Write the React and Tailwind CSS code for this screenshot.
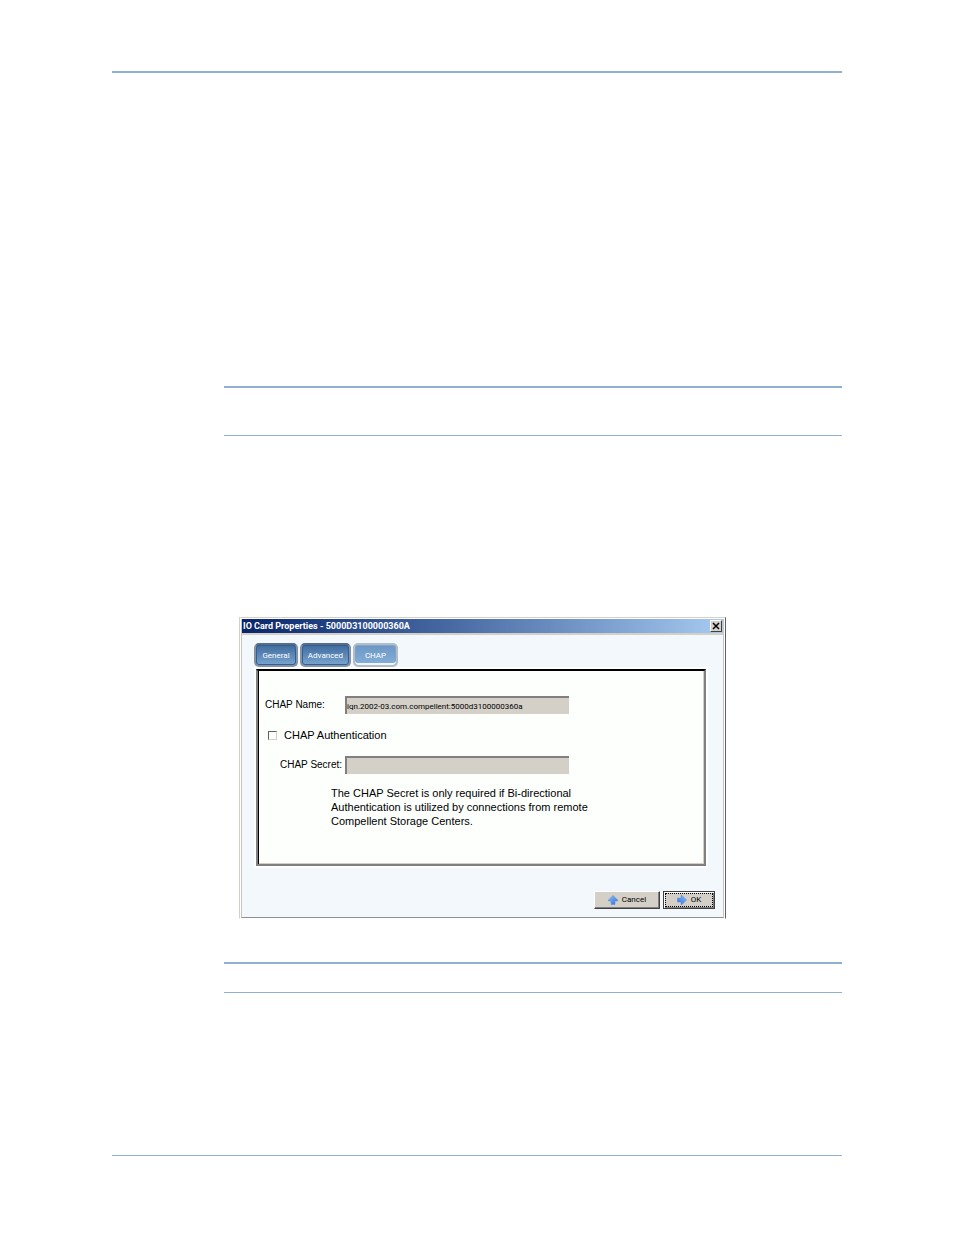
import React from "react";

const tabBase =
  "h-6 rounded-[5px] border-2 pt-px text-[8px] leading-none text-white flex items-center justify-center font-[Roboto,sans-serif]";

function Tab({ label, active, width }) {
  const look = active
    ? "border-[#b4bcc4] bg-linear-to-b from-[#6c97c4] to-[#86afd8] shadow-[inset_0_-2px_0_#f0f5fa,inset_0_0_0_1px_#7ba5d0]"
    : "border-[#8593a3] border-t-[#5a6c82] bg-linear-to-b from-[#3e6b9e] to-[#7ba5d0] shadow-[inset_0_0_0_1px_#2f5f96]";
  return (
    <button type="button" role="tab" aria-selected={Boolean(active)} className={`${tabBase} ${look} ${width}`}>
      {label}
    </button>
  );
}

function Arrow({ className }) {
  return (
    <svg viewBox="0 0 10 10" className={`size-[10px] shrink-0 ${className}`} aria-hidden="true">
      <defs>
        <linearGradient id="arrowFill" x1="0" y1="0" x2="1" y2="1">
          <stop offset="0" stopColor="#8cc0fb" />
          <stop offset="1" stopColor="#2f6fdc" />
        </linearGradient>
      </defs>
      <path d="M5 0.4 L9.6 5 V6 H7 V9.6 H3 V6 H0.4 V5 Z" fill="url(#arrowFill)" stroke="#5a8cd8" strokeWidth="0.5" />
    </svg>
  );
}

const field =
  "h-[18px] w-56 shrink-0 bg-[#d4d0c8] border-0 border-t-2 border-l-2 border-[#808080] text-[8px] leading-none text-black outline-none font-[Roboto,sans-serif]";

function Dialog() {
  return (
    <section
      role="dialog"
      aria-label="IO Card Properties"
      className="w-[487px] max-w-full border border-[#d4d0c8] border-r-[#606060] border-b-white bg-white p-px pb-0"
    >
      <div className="border border-[#c8c5be] border-t-0 border-b-[#909090] bg-[#f3f8fc]">
        <header className="flex h-[14px] items-center justify-between bg-linear-to-r from-[#0a246a] to-[#a6caf0] px-px">
          <h1 className="text-[9px] leading-none font-bold text-white font-[Roboto,sans-serif]">
            IO Card Properties - 5000D3100000360A
          </h1>
          <button
            type="button"
            aria-label="Close"
            className="flex h-3 w-3 items-center justify-center border border-white border-r-[#404040] border-b-[#404040] bg-[#d4d0c8]"
          >
            <svg viewBox="0 0 8 8" className="size-2" aria-hidden="true">
              <path d="M1 1 L7 7 M7 1 L1 7" stroke="#000" strokeWidth="1.5" />
            </svg>
          </button>
        </header>
        <div className="border-t-2 border-[#d4d0c8] px-3 pt-2 pb-2">
          <div role="tablist" className="flex gap-[2px]">
            <Tab label="General" width="w-11" />
            <Tab label="Advanced" width="w-[51px]" />
            <Tab label="CHAP" width="w-[45px]" active />
          </div>
          <div className="mr-[3px] bg-white p-[2px]">
            <form className="h-[197px] border-2 border-[#808080] border-t-black bg-[#fdfffd] shadow-[inset_1px_0_0_#000,inset_-1px_-1px_0_#d4d0c8] font-['Liberation_Sans',Arial,sans-serif] text-black">
              <div className="flex items-center pt-[25px] pl-[7px]">
                <label htmlFor="chap-name" className="w-20 text-[10px] leading-[18px]">CHAP Name:</label>
                <input id="chap-name" className={field} readOnly defaultValue="iqn.2002-03.com.compellent:5000d3100000360a" />
              </div>
              <div className="mt-3 flex items-center gap-[7px] pl-[10px]">
                <input
                  id="chap-auth"
                  type="checkbox"
                  className="size-[9px] appearance-none border border-[#d4d0c8] border-t-[#606060] border-l-[#606060] bg-white checked:bg-black"
                />
                <label htmlFor="chap-auth" className="text-[11px] leading-[18px]">CHAP Authentication</label>
              </div>
              <div className="mt-3 flex items-center pl-[22px]">
                <label htmlFor="chap-secret" className="w-[65px] text-[10px] leading-[18px]">CHAP Secret:</label>
                <input id="chap-secret" type="password" className={field} readOnly />
              </div>
              <p className="mt-3 pl-[73px] text-[11px] leading-[14px]">
                The CHAP Secret is only required if Bi-directional<br />
                Authentication is utilized by connections from remote<br />
                Compellent Storage Centers.
              </p>
            </form>
          </div>
          <footer className="mt-[23px] -mr-1 flex justify-end gap-[3px] text-[8px] leading-none font-[Roboto,sans-serif]">
            <button
              type="button"
              className="flex h-[18px] w-[66px] items-center justify-center gap-1 border border-white border-r-[#404040] border-b-[#404040] bg-[#d4d0c8] shadow-[inset_-1px_-1px_0_#808080]"
            >
              <Arrow className="" />
              Cancel
            </button>
            <button
              type="button"
              className="flex h-[18px] w-[52px] border border-[#404040] bg-[#d4d0c8] p-px shadow-[inset_1px_1px_0_#fff,inset_-1px_-1px_0_#808080]"
            >
              <span className="flex h-full w-full items-center justify-center gap-1 border border-dotted border-black">
                <Arrow className="rotate-90" />
                OK
              </span>
            </button>
          </footer>
        </div>
      </div>
    </section>
  );
}

export default function App() {
  return (
    <main className="min-h-screen bg-white px-28 pt-[71px] pb-[79px]">
      <div className="border-t-2 border-b border-[#8fb0cf] pb-[162px]">
        <div className="mt-[313px] ml-28">
          <div className="h-[50px] border-t-2 border-b border-[#8fb0cf]" />
          <div className="mt-[181px] ml-[15px]">
            <Dialog />
          </div>
          <div className="mt-[43px] h-[31px] border-t-2 border-b border-[#8fb0cf]" />
        </div>
      </div>
    </main>
  );
}
